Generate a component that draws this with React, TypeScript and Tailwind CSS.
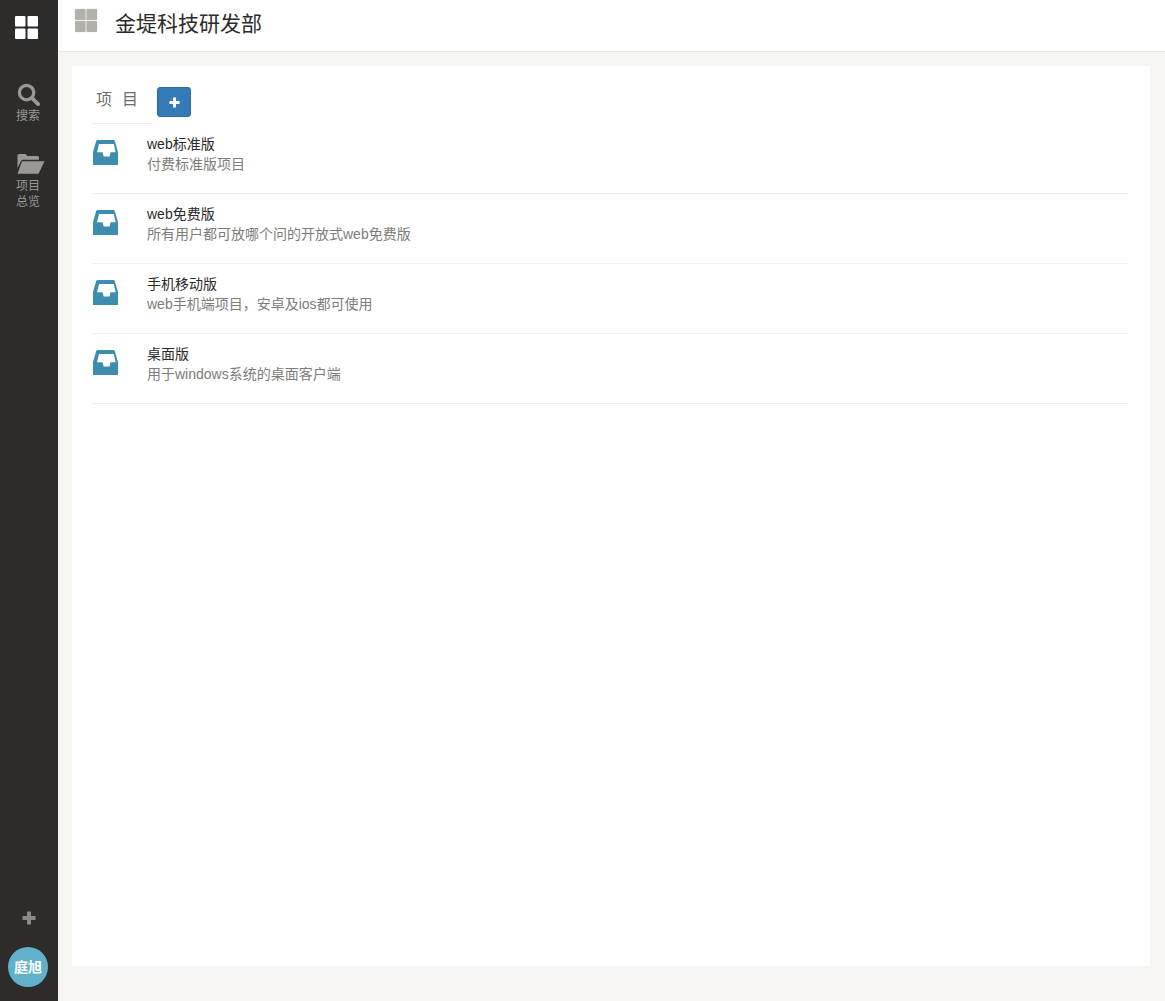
// App.tsx
const font = "font-['Liberation_Sans','Noto_Sans_CJK_SC',sans-serif]"

const projects = [
  { name: 'web标准版', desc: '付费标准版项目' },
  { name: 'web免费版', desc: '所有用户都可放哪个问的开放式web免费版' },
  { name: '手机移动版', desc: 'web手机端项目，安卓及ios都可使用' },
  { name: '桌面版', desc: '用于windows系统的桌面客户端' },
]

function Inbox() {
  return (
    <svg viewBox="0 0 25 25" className="w-[25px] h-[25px] text-[#3c8dae]" fill="currentColor">
      <path
        fillRule="evenodd"
        d="M4.6 0H20.4Q21.4 0 21.8 1L25 12V25H0V12L3.2 1Q3.6 0 4.6 0ZM6 4L4 12.3H9.5L10.7 16.5H16.7L17.5 12.3H22.7L20.8 4Z"
      />
    </svg>
  )
}

export default function App() {
  return (
    <div className={`${font} flex h-[1001px] bg-[#f6f5f1] overflow-hidden`}>
      {/* Sidebar */}
      <aside className="w-[58px] shrink-0 bg-[#2d2c2a] flex flex-col items-center text-[#9a9894] text-xs leading-[16px]">
        <svg viewBox="0 0 23 23" className="w-[23px] h-[23px] mt-[16px] mr-[5px] text-white" fill="currentColor">
          <rect x="0" y="0" width="10.5" height="10.5" rx="1" />
          <rect x="12.5" y="0" width="10.5" height="10.5" rx="1" />
          <rect x="0" y="12.5" width="10.5" height="10.5" rx="1" />
          <rect x="12.5" y="12.5" width="10.5" height="10.5" rx="1" />
        </svg>
        <svg viewBox="0 0 24 24" className="w-[23px] h-[23px] mt-[44px] mr-[2px]" fill="none" stroke="currentColor">
          <circle cx="10" cy="10" r="7.5" strokeWidth="3.4" />
          <path d="M15.5 15.5L22 22" strokeWidth="4" strokeLinecap="round" />
        </svg>
        <span className="mt-[2px] mr-[2px]">搜索</span>
        <svg viewBox="0 0 28 22" className="w-[28px] h-[22px] mt-[29px] ml-[3px]" fill="currentColor">
          <path d="M0.5 15V2.5Q0.5 1 2 1H8.5L10.5 3H20.5Q22 3 22 4.5V6.7H6Q4.6 6.7 4 8Z" />
          <path d="M5 8.3H27.5L21.5 20.8H0.5Z" />
        </svg>
        <span className="mt-[3px] mr-[2px] text-center">项目<br />总览</span>
        <div className="mt-auto flex flex-col items-center">
          <svg viewBox="0 0 14 14" className="w-[14px] h-[14px] text-[#8a8986]" fill="currentColor">
            <path d="M5 0.5H9V5H13.5V9H9V13.5H5V9H0.5V5H5Z" />
          </svg>
          <div className="w-[40px] h-[40px] mt-[22px] mb-[14px] mr-[2px] rounded-full bg-[#62b1cb] text-white text-[14px] font-bold flex items-center justify-center">
            庭旭
          </div>
        </div>
      </aside>

      <div className="flex-1 min-w-0 flex flex-col">
        {/* Header */}
        <header className="h-[52px] shrink-0 bg-white border-b border-[#e6e5e1] flex items-start pl-[16px]">
          <svg viewBox="0 0 24 25" className="w-[24px] h-[25px] mt-[8px] text-[#b1b0aa]" fill="currentColor" stroke="#efeeea" strokeWidth="1" paintOrder="stroke">
            <rect x="1" y="1" width="10.5" height="11" rx="1" />
            <rect x="12.5" y="1" width="10.5" height="11" rx="1" />
            <rect x="1" y="13" width="10.5" height="11" rx="1" />
            <rect x="12.5" y="13" width="10.5" height="11" rx="1" />
          </svg>
          <h1 className="ml-[17px] mt-[9px] text-[21px] leading-[30px] font-normal text-[#2b2a28]">金堤科技研发部</h1>
        </header>

        {/* Content */}
        <main className="ml-[14px] mr-[15px] mt-[14px] mb-[35px] pl-[21px] pr-[22px] flex-1 bg-white">
          <div className="flex items-start h-[57px] pt-[21px]">
            <span className="ml-[3px] mt-[2px] text-[16px] leading-[22px] tracking-[10px] text-[#6f6d69]">项目</span>
            <button className="ml-[9px] w-[34px] h-[30px] rounded-[3px] bg-[#337ab7] border border-[#2e6da4] flex items-center justify-center">
              <svg viewBox="0 0 12 12" className="w-[11px] h-[11px] text-white" fill="currentColor">
                <path d="M4.4 0.5H7.6V4.4H11.5V7.6H7.6V11.5H4.4V7.6H0.5V4.4H4.4Z" />
              </svg>
            </button>
          </div>
          <div className="w-[60px] border-t border-[#efeeea]" />
          <ul>
            {projects.map(p => (
              <li key={p.name} className="h-[70px] border-b border-[#efeeea] flex items-start">
                <div className="mt-[16px] shrink-0">
                  <Inbox />
                </div>
                <div className="ml-[29px] mt-[10px] text-[14px] leading-[20px]">
                  <p className="text-[#2b2a28]">{p.name}</p>
                  <p className="text-[#7d7c78]">{p.desc}</p>
                </div>
              </li>
            ))}
          </ul>
        </main>
      </div>
    </div>
  )
}
